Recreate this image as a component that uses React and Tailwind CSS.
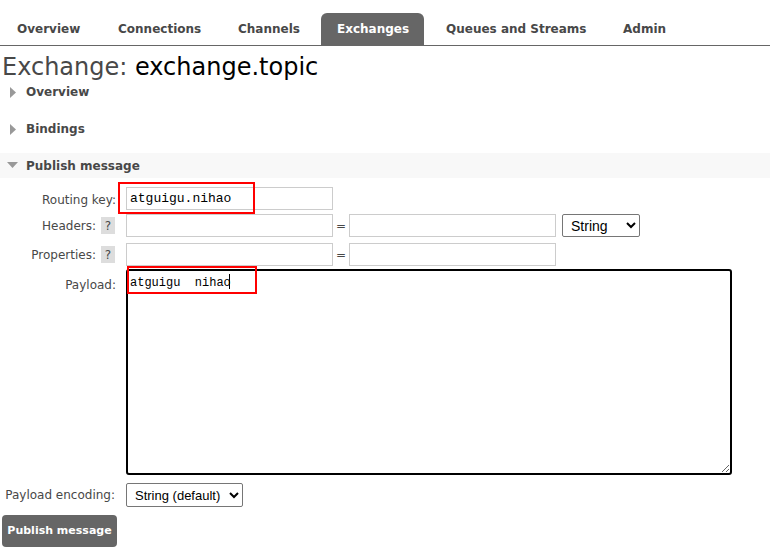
import React from "react";

const tabs = [
  { name: "Overview", w: "w-[101px]" },
  { name: "Connections", w: "w-[120px]" },
  { name: "Channels", w: "w-[99px]" },
  { name: "Exchanges", w: "w-[103px] mr-[6px]" },
  { name: "Queues and Streams", w: "w-[177px]" },
  { name: "Admin", w: "w-[80px]" },
];

function Caret({ open }) {
  return open ? (
    <svg width="11" height="7" viewBox="0 0 11 7" className="shrink-0">
      <polygon points="0,0 11,0 5.5,6" fill="#999" />
    </svg>
  ) : (
    <svg width="7" height="11" viewBox="0 0 7 11" className="shrink-0">
      <polygon points="0,0 6,5.5 0,11" fill="#999" />
    </svg>
  );
}

function Help() {
  return (
    <span className="inline-flex w-[14px] h-[17px] items-center justify-center bg-[#ddd] text-[12px] text-[#484848]">?</span>
  );
}

const mono = { fontFamily: "'Liberation Mono', 'Courier New', monospace" };
const arial = { fontFamily: "'Liberation Sans', Arial, sans-serif" };

export default function App() {
  return (
    <div
      className="w-[770px] h-[553px] bg-white text-[#484848] overflow-hidden"
      style={{ fontFamily: "'DejaVu Sans', Verdana, sans-serif" }}
    >
      {/* top tabs */}
      <div className="pt-[13px] flex items-end border-b border-[#666] h-[46px] pl-[1px]">
        {tabs.map((t) => (
          <div
            key={t.name}
            className={`${t.w} h-[32px] flex items-center pl-[16px] text-[12px] font-bold whitespace-nowrap rounded-t-[6px] ${
              t.name === "Exchanges" ? "bg-[#666] text-white" : "text-[#484848]"
            }`}
          >
            {t.name}
          </div>
        ))}
      </div>

      <h1 className="text-[24px] leading-[30px] pl-[2px] mt-[6px] text-[#484848] whitespace-nowrap">
        Exchange: <span className="text-black">exchange.topic</span>
      </h1>

      <div className="h-[26px] flex items-center gap-[9px] pl-[10px] text-[12px] font-bold mt-[-3px]">
        <Caret /> Overview
      </div>
      <div className="h-[26px] flex items-center gap-[9px] pl-[10px] text-[12px] font-bold mt-[11px]">
        <Caret /> Bindings
      </div>
      <div className="h-[25px] flex items-center gap-[8px] pl-[7px] text-[12px] font-bold mt-[11px] bg-[#f8f8f8]">
        <Caret open /> Publish message
      </div>

      {/* form */}
      <div className="text-[12px] mt-[9px]">
        <div className="flex items-center h-[23px]">
          <div className="w-[126px] pr-[10px] pt-[2px] text-right whitespace-nowrap">Routing key:</div>
          <div className="relative">
            <input
              readOnly
              value="atguigu.nihao"
              className="w-[207px] h-[23px] border border-[#ccc] px-[3px] text-[13px] text-black outline-none"
              style={mono}
            />
            <div className="absolute left-[-8px] top-[-5px] w-[137px] h-[32px] border-2 border-[#f00] pointer-events-none" />
          </div>
        </div>

        <div className="flex items-center h-[23px] mt-[4px]">
          <div className="w-[126px] pr-[11px] flex justify-end items-center gap-[5px] whitespace-nowrap">
            Headers: <Help />
          </div>
          <input readOnly className="w-[207px] h-[23px] border border-[#ccc] outline-none" />
          <span className="w-[16px] text-center text-[12px]">=</span>
          <input readOnly className="w-[207px] h-[23px] border border-[#ccc] outline-none" />
          <select
            className="ml-[6px] w-[78px] h-[23px] border border-[#767676] rounded-[2px] text-[14px] text-black pl-[4px]"
            style={arial}
            defaultValue="String"
          >
            <option>String</option>
          </select>
        </div>

        <div className="flex items-center h-[23px] mt-[6px]">
          <div className="w-[126px] pr-[11px] flex justify-end items-center gap-[5px] whitespace-nowrap">
            Properties: <Help />
          </div>
          <input readOnly className="w-[207px] h-[23px] border border-[#ccc] outline-none" />
          <span className="w-[16px] text-center text-[12px]">=</span>
          <input readOnly className="w-[207px] h-[23px] border border-[#ccc] outline-none" />
        </div>

        <div className="flex items-start mt-[3px]">
          <div className="w-[126px] pr-[10px] text-right pt-[7px]">Payload:</div>
          <div className="relative">
            <textarea
              readOnly
              value="atguigu  nihao"
              className="block w-[606px] h-[206px] border-2 border-black rounded-[3px] px-[2px] pt-[3px] text-[12px] text-black outline-none"
              style={mono}
            />
            <div className="absolute left-[1px] top-[-3px] w-[130px] h-[28px] border-2 border-[#f00] pointer-events-none" />
            <div className="absolute left-[103px] top-[5px] w-px h-[15px] bg-black" />
          </div>
        </div>

        <div className="flex items-center h-[24px] mt-[8px]">
          <div className="w-[126px] pr-[11px] text-right whitespace-nowrap">Payload encoding:</div>
          <select
            className="w-[117px] h-[24px] border border-[#767676] rounded-[2px] text-[13px] text-black pl-[4px]"
            style={arial}
            defaultValue="String (default)"
          >
            <option>String (default)</option>
          </select>
        </div>

        <button className="ml-[2px] mt-[8px] w-[115px] h-[32px] bg-[#666] text-white font-bold text-[11px] whitespace-nowrap rounded-[4px]">
          Publish message
        </button>
      </div>
    </div>
  );
}
